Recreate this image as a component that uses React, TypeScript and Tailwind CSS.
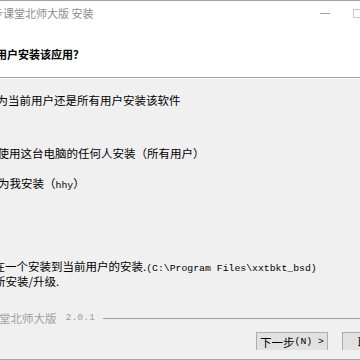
import React from "react";

const mono = "font-['Liberation_Mono',monospace]";

const WizardButton = ({ children }: { children: React.ReactNode }) => (
  <div className="w-[72px] h-[20px] shrink-0 flex items-center justify-center bg-[#e1e1e1] border border-[#adadad] text-[11.5px] leading-[14px] text-black whitespace-nowrap">
    {children}
  </div>
);

const App = () => {
  return (
    <div className="w-[360px] h-[360px] overflow-hidden bg-[#f0f0f0] flex flex-col font-['Noto_Sans_CJK_SC',sans-serif] text-black">
      {/* window frame top */}
      <div className="h-px bg-[#a0a0a0] shrink-0" />

      {/* title bar + header */}
      <div className="h-[76px] bg-white flex flex-col shrink-0">
        <div className="h-[24px] flex items-center">
          <span className="ml-[-41px] text-[11px] leading-[14px] text-[#8c8c8c] whitespace-nowrap">
            小学同步课堂北师大版 安装
          </span>
          <div className="flex-1" />
          <div className="w-[46px] h-full flex items-center justify-center">
            <div className="w-[10px] h-px bg-[#a0a0a0]" />
          </div>
          <div className="w-[12px] h-full flex items-center justify-end overflow-hidden">
            <div className="w-[10px] h-[9px] shrink-0 border border-[#c8c8c8] mr-[-3px]" />
          </div>
        </div>
        <div className="mt-[22px] ml-[-37px] text-[11px] leading-[14px] font-bold whitespace-nowrap">
          为哪些用户安装该应用？
        </div>
      </div>
      <div className="h-px bg-[#a0a0a0] shrink-0" />
      <div className="h-px bg-white shrink-0" />

      {/* body */}
      <div className="flex flex-col text-[11.5px] whitespace-nowrap">
        <div className="mt-[14px] ml-[-38px] leading-[14px]">
          请选择为当前用户还是所有用户安装该软件
        </div>
        <div className="mt-[39px] ml-[-14px] leading-[14px]">
          为使用这台电脑的任何人安装（所有用户）
        </div>
        <div className="mt-[16px] ml-[-13.5px] leading-[14px]">
          仅为我安装（<span className={`${mono} text-[9.8px]`}>hhy</span>）
        </div>
        <div className="mt-[67px] ml-[-41px] leading-[13px]">
          <div>
            已经存在一个安装到当前用户的安装.
            <span className={`${mono} text-[9.8px]`}>(C:\Program Files\xxtbkt_bsd)</span>
          </div>
          <div className="ml-[12px]">将重新安装/升级.</div>
        </div>
      </div>

      {/* branding line */}
      <div className="mt-[23px] flex items-center h-[14px] text-[11.5px] leading-[14px] text-[#a0a0a0] whitespace-nowrap">
        <span className="ml-[-58.5px]">小学同步课堂北师大版</span>
        <span className={`${mono} text-[9.8px] ml-[9px]`}>2.0.1</span>
        <div className="flex-1 h-px bg-[#a0a0a0] ml-[8px]" />
      </div>

      {/* buttons */}
      <div className="mt-[7px] flex gap-[14px] pl-[256px] overflow-hidden">
        <WizardButton>
          下一步<span className={`${mono} text-[9.8px]`}>(N) &gt;</span>
        </WizardButton>
        <WizardButton>
          取消<span className={`${mono} text-[9.8px]`}>(C)</span>
        </WizardButton>
      </div>

      {/* window frame bottom */}
      <div className="mt-[9px] h-px bg-[#a8a8a8] shrink-0" />
      <div className="flex-1 bg-[#d2d2d2] flex">
        <div className="w-[72px]" />
        <div className="w-[16px] bg-[#bdbdbd]" />
      </div>
    </div>
  );
};

export default App;
